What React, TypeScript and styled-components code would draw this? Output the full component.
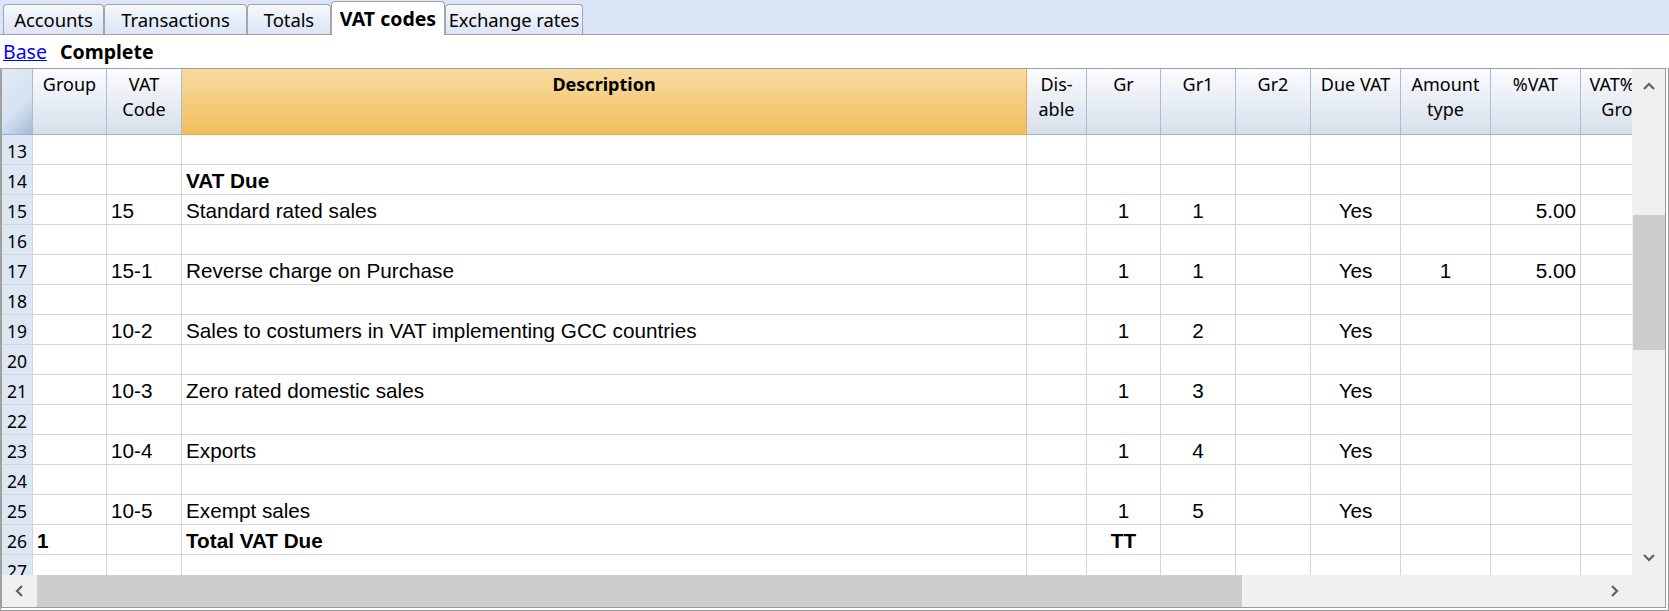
import React from "react";
import styled, { createGlobalStyle, css } from "styled-components";

const GlobalStyle = createGlobalStyle`
  html, body { margin: 0; padding: 0; background: #ffffff; overflow: hidden; }
  * { box-sizing: border-box; }
`;

const UI_FONT = `"Noto Sans", "Open Sans", "DejaVu Sans", sans-serif`;
const CELL_FONT = `"Liberation Sans", Arial, sans-serif`;

const Window = styled.div`
  width: 1669px;
  height: 611px;
  display: flex;
  flex-direction: column;
  background: #ffffff;
`;

const TabBar = styled.div`
  height: 35px;
  flex: 0 0 35px;
  display: flex;
  align-items: flex-end;
  padding-left: 3px;
  background: #dae6f8;
  border-bottom: 1px solid #a0a0a0;
`;

const Tab = styled.div<{ $active?: boolean; $w: number }>`
  width: ${(p) => p.$w}px;
  height: 30px;
  display: flex;
  align-items: center;
  justify-content: center;
  font-family: ${UI_FONT};
  font-size: 18.5px;
  letter-spacing: -0.1px;
  color: #000;
  border: 1px solid #a5a5a5;
  border-bottom: none;
  border-radius: 4px 4px 0 0;
  background: linear-gradient(#f5f8fd, #dbe5f5);
  white-space: nowrap;
  overflow: hidden;
  ${(p) =>
    p.$active &&
    css`
      height: 34px;
      margin-bottom: -1px;
      background: #ffffff;
      font-weight: 700;
      font-size: 19.5px;
      letter-spacing: 0;
      position: relative;
      z-index: 1;
    `}
`;

const SubBar = styled.div`
  height: 33px;
  flex: 0 0 33px;
  display: flex;
  align-items: center;
  gap: 13px;
  padding-left: 3px;
  font-family: ${UI_FONT};
  font-size: 19.5px;
`;

const ViewLink = styled.a`
  color: #0000ff;
  text-decoration: underline;
  cursor: pointer;
`;

const ViewCurrent = styled.span`
  font-weight: 700;
  color: #000;
`;

const Frame = styled.div`
  flex: 1 1 auto;
  display: grid;
  grid-template-columns: 1fr 33px;
  grid-template-rows: 1fr 32px;
  border-top: 1px solid #a0a0a0;
  border-left: 2px solid #a0a0a0;
  border-right: 4px double #9a9a9a;
  border-bottom: 4px double #9a9a9a;
  min-height: 0;
`;

const Viewport = styled.div`
  overflow: hidden;
  min-width: 0;
  min-height: 0;
`;

const Sheet = styled.div`
  display: grid;
  grid-template-columns: 31px 74px 75px 845px 60px 74px 75px 75px 90px 90px 90px 90px;
  grid-template-rows: 66px;
  grid-auto-rows: 30px;
  width: max-content;
`;

const HeadCell = styled.div<{ $accent?: boolean }>`
  font-family: ${UI_FONT};
  font-size: 18px;
  line-height: 25px;
  padding: 3px 2px 0;
  text-align: center;
  color: #000;
  overflow: hidden;
  white-space: pre-line;
  background: linear-gradient(#fbfcfe, #d6dfeb);
  border-right: 1px solid #a9bcd3;
  border-bottom: 1px solid #9fb2ca;
  ${(p) =>
    p.$accent &&
    css`
      font-weight: 700;
      background: linear-gradient(#f8dba1, #f1be5c);
      border-right: 1px solid #f2a63e;
      border-bottom: 1px solid #eca644;
    `}
`;

const CornerCell = styled.div`
  background: linear-gradient(135deg, #e2ebf7 0%, #d6e2f2 58%, #a6bad4 100%);
  border-right: 1px solid #a9bcd3;
  border-bottom: 1px solid #9fb2ca;
`;

const RowNum = styled.div`
  font-family: ${UI_FONT};
  font-size: 17.5px;
  line-height: 30px;
  padding-top: 1px;
  text-align: center;
  color: #000;
  background: #dde7f4;
  border-bottom: 1px solid #d4d4d4;
  border-right: 1px solid #d4d4d4;
  overflow: hidden;
`;

const Cell = styled.div<{ $align?: "left" | "center" | "right"; $bold?: boolean }>`
  font-family: ${CELL_FONT};
  font-size: 20.7px;
  line-height: 29px;
  padding: 1px 4px 0 4px;
  text-align: ${(p) => p.$align ?? "left"};
  font-weight: ${(p) => (p.$bold ? 700 : 400)};
  color: #000;
  white-space: nowrap;
  overflow: hidden;
  border-right: 1px solid #d4d4d4;
  border-bottom: 1px solid #d4d4d4;
`;

const ScrollTrack = styled.div<{ $dir: "v" | "h" }>`
  background: #f0f0f0;
  display: flex;
  flex-direction: ${(p) => (p.$dir === "v" ? "column" : "row")};
  min-height: 0;
  min-width: 0;
`;

const ArrowButton = styled.div`
  flex: 0 0 35px;
  display: flex;
  align-items: center;
  justify-content: center;
`;

const TrackSpace = styled.div`
  flex: 1 1 auto;
  display: flex;
  min-width: 0;
  min-height: 0;
`;

const VThumb = styled.div`
  margin-top: 111px;
  height: 135px;
  width: 100%;
  margin-left: 1px;
  background: #cdcdcd;
`;

const HThumb = styled.div`
  width: 1205px;
  height: 100%;
  background: #cdcdcd;
`;

const Corner = styled.div`
  background: #f0f0f0;
`;

const Chevron = ({ dir }: { dir: "up" | "down" | "left" | "right" }) => {
  const pts: Record<string, string> = {
    up: "1,7 6,2 11,7",
    down: "1,2 6,7 11,2",
    left: "7,1 2,6 7,11",
    right: "2,1 7,6 2,11",
  };
  const vertical = dir === "up" || dir === "down";
  return (
    <svg width={vertical ? 12 : 9} height={vertical ? 9 : 12} viewBox={vertical ? "0 0 12 9" : "0 0 9 12"}>
      <polyline points={pts[dir]} fill="none" stroke="#606060" strokeWidth="2.2" />
    </svg>
  );
};

type Row = {
  n: number;
  group?: string;
  code?: string;
  desc?: string;
  gr?: string;
  gr1?: string;
  due?: string;
  amt?: string;
  pct?: string;
  bold?: boolean;
};

const rows: Row[] = [
  { n: 13 },
  { n: 14, desc: "VAT Due", bold: true },
  { n: 15, code: "15", desc: "Standard rated sales", gr: "1", gr1: "1", due: "Yes", pct: "5.00" },
  { n: 16 },
  { n: 17, code: "15-1", desc: "Reverse charge on Purchase", gr: "1", gr1: "1", due: "Yes", amt: "1", pct: "5.00" },
  { n: 18 },
  { n: 19, code: "10-2", desc: "Sales to costumers in VAT implementing GCC countries", gr: "1", gr1: "2", due: "Yes" },
  { n: 20 },
  { n: 21, code: "10-3", desc: "Zero rated domestic sales", gr: "1", gr1: "3", due: "Yes" },
  { n: 22 },
  { n: 23, code: "10-4", desc: "Exports", gr: "1", gr1: "4", due: "Yes" },
  { n: 24 },
  { n: 25, code: "10-5", desc: "Exempt sales", gr: "1", gr1: "5", due: "Yes" },
  { n: 26, group: "1", desc: "Total VAT Due", gr: "TT", bold: true },
  { n: 27 },
  { n: 28 },
];

const tabs = [
  { label: "Accounts", w: 101 },
  { label: "Transactions", w: 143 },
  { label: "Totals", w: 84 },
  { label: "VAT codes", w: 114, active: true },
  { label: "Exchange rates", w: 138 },
];

const headers = [
  "Group",
  "VAT\nCode",
  "Description",
  "Dis-\nable",
  "Gr",
  "Gr1",
  "Gr2",
  "Due VAT",
  "Amount\ntype",
  "%VAT",
  "VAT% on\nGross",
];

export default function App() {
  return (
    <>
      <GlobalStyle />
      <Window>
        <TabBar>
          {tabs.map((t) => (
            <Tab key={t.label} $w={t.w} $active={t.active}>
              {t.label}
            </Tab>
          ))}
        </TabBar>
        <SubBar>
          <ViewLink>Base</ViewLink>
          <ViewCurrent>Complete</ViewCurrent>
        </SubBar>
        <Frame>
          <Viewport>
            <Sheet>
              <CornerCell />
              {headers.map((h) => (
                <HeadCell key={h} $accent={h === "Description"}>
                  {h}
                </HeadCell>
              ))}
              {rows.map((r) => (
                <React.Fragment key={r.n}>
                  <RowNum>{r.n}</RowNum>
                  <Cell $bold={r.bold}>{r.group}</Cell>
                  <Cell>{r.code}</Cell>
                  <Cell $bold={r.bold}>{r.desc}</Cell>
                  <Cell />
                  <Cell $align="center" $bold={r.bold}>{r.gr}</Cell>
                  <Cell $align="center">{r.gr1}</Cell>
                  <Cell />
                  <Cell $align="center">{r.due}</Cell>
                  <Cell $align="center">{r.amt}</Cell>
                  <Cell $align="right">{r.pct}</Cell>
                  <Cell />
                </React.Fragment>
              ))}
            </Sheet>
          </Viewport>
          <ScrollTrack $dir="v">
            <ArrowButton>
              <Chevron dir="up" />
            </ArrowButton>
            <TrackSpace>
              <VThumb />
            </TrackSpace>
            <ArrowButton>
              <Chevron dir="down" />
            </ArrowButton>
          </ScrollTrack>
          <ScrollTrack $dir="h">
            <ArrowButton>
              <Chevron dir="left" />
            </ArrowButton>
            <TrackSpace>
              <HThumb />
            </TrackSpace>
            <ArrowButton>
              <Chevron dir="right" />
            </ArrowButton>
          </ScrollTrack>
          <Corner />
        </Frame>
      </Window>
    </>
  );
}
